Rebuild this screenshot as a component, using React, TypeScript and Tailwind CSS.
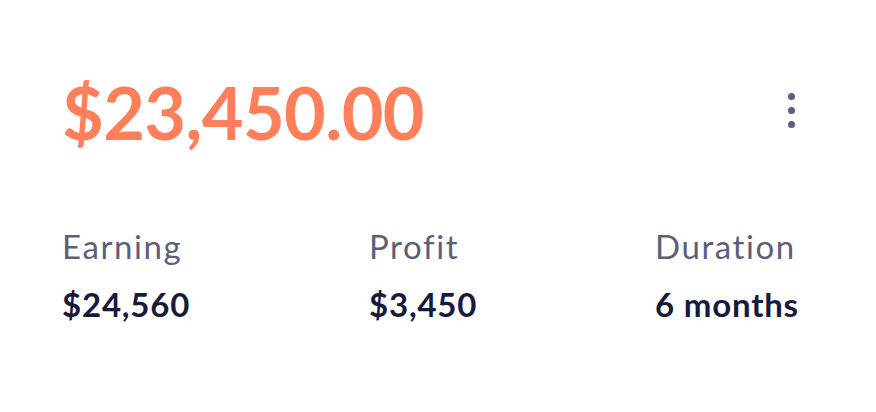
export default function App() {
  return (
    <div className="w-[876px] h-[412px] bg-white pl-[62px] pr-[81px] pt-[72px]" style={{ fontFamily: "Lato, 'Noto Sans', sans-serif" }}>
      <div className="flex items-center justify-between">
        <div className="text-[72px] leading-[80px] font-bold text-[#FF7F5A] tracking-[-0.6px] whitespace-nowrap">$23,450.00</div>
        <div className="flex flex-col gap-[7px] items-center mb-[4px]">
          <span className="w-[7px] h-[7px] rounded-full bg-[#5D5F79]" />
          <span className="w-[7px] h-[7px] rounded-full bg-[#5D5F79]" />
          <span className="w-[7px] h-[7px] rounded-full bg-[#5D5F79]" />
        </div>
      </div>
      <div className="grid grid-cols-[307px_286px_1fr] mt-[74px] whitespace-nowrap">
        <div className="flex flex-col gap-[18px]">
          <div className="text-[33px] leading-[40px] text-[#5D5F79] tracking-[1.6px]">Earning</div>
          <div className="text-[33px] leading-[40px] font-bold text-[#171A3A] tracking-[0.8px]">$24,560</div>
        </div>
        <div className="flex flex-col gap-[18px]">
          <div className="text-[33px] leading-[40px] text-[#5D5F79] tracking-[1.6px]">Profit</div>
          <div className="text-[33px] leading-[40px] font-bold text-[#171A3A] tracking-[0.8px]">$3,450</div>
        </div>
        <div className="flex flex-col gap-[18px]">
          <div className="text-[33px] leading-[40px] text-[#5D5F79] tracking-[1.6px]">Duration</div>
          <div className="text-[33px] leading-[40px] font-bold text-[#171A3A] tracking-[0.8px]">6 months</div>
        </div>
      </div>
    </div>
  );
}
